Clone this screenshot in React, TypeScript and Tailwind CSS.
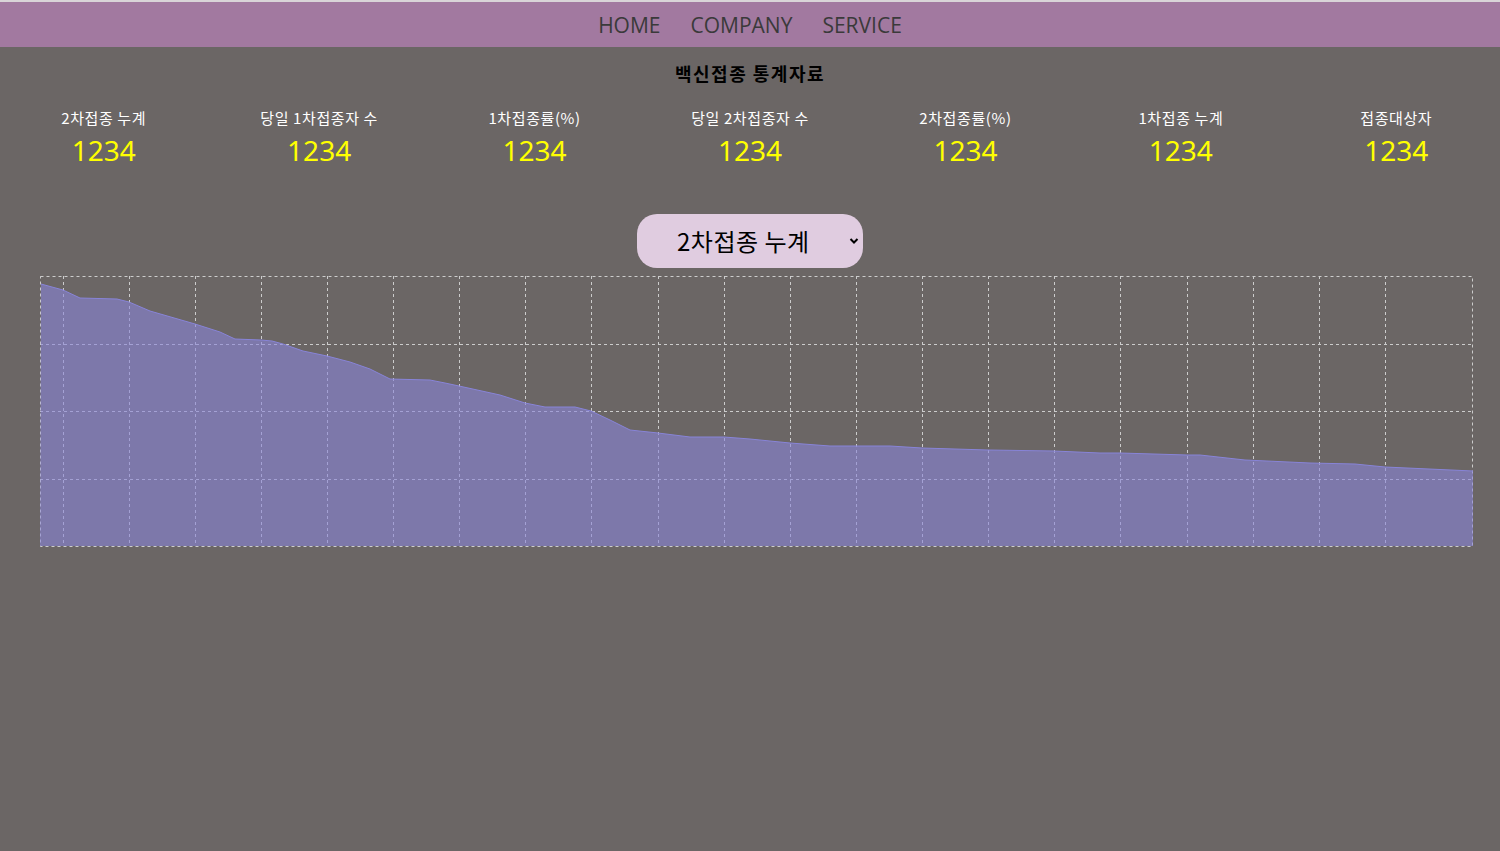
import React from "react";

const stats = [
  "2차접종 누계",
  "당일 1차접종자 수",
  "1차접종률(%)",
  "당일 2차접종자 수",
  "2차접종률(%)",
  "1차접종 누계",
  "접종대상자",
];

// chart points in page px (chart box starts at x=40, y=276)
const pts: [number, number][] = [
  [41, 284], [63, 290], [80, 298], [117, 299], [129, 302], [150, 311], [195, 324],
  [220, 332], [235, 339], [261, 340], [272, 341], [283, 344], [303, 351], [327, 356],
  [350, 362], [370, 369], [390, 379], [430, 380], [445, 383], [459, 386], [500, 395],
  [525, 403], [545, 407], [575, 407], [591, 411], [610, 420], [630, 430], [658, 433],
  [690, 437], [724, 437], [750, 439], [790, 443], [830, 446], [890, 446], [922, 448],
  [988, 450], [1054, 451], [1100, 453], [1120, 453], [1187, 455], [1200, 455],
  [1245, 460], [1310, 463], [1355, 464], [1385, 467], [1473, 471],
];

const vLines = [63, 129, 195, 261, 327, 393, 459, 525, 591, 658, 724, 790, 856, 922, 988, 1054, 1120, 1187, 1253, 1319, 1385];
const hLines = [344, 411, 479];

function Chart() {
  const W = 1433;
  const H = 270;
  const line = pts.map(([x, y]) => `${x - 40},${y - 276}`).join(" L ");
  const area = `M 0,${H} L ${line} L ${W},${H} Z`;
  return (
    <svg width={W} height={H + 1} viewBox={`0 0 ${W} ${H + 1}`} className="block">
      <g stroke="#cccccc" strokeDasharray="3 3" strokeWidth="1" fill="none">
        <rect x="0.5" y="0.5" width={W - 1} height={H} />
        {vLines.map((x) => (
          <line key={x} x1={x - 40 + 0.5} y1="0" x2={x - 40 + 0.5} y2={H} />
        ))}
        {hLines.map((y) => (
          <line key={y} x1="0" y1={y - 276 + 0.5} x2={W} y2={y - 276 + 0.5} />
        ))}
      </g>
      <path d={area} fill="#8884d8" fillOpacity="0.6" />
      <path d={`M ${line}`} fill="none" stroke="#8884d8" strokeWidth="1" />
    </svg>
  );
}

export default function App() {
  return (
    <div className="min-h-[851px] w-full overflow-hidden bg-[#6b6665] font-['Noto_Sans','Noto_Sans_CJK_KR',sans-serif]">
      <nav className="h-[47px] border-t-2 border-[#d9d4d8] bg-[#a279a0] flex items-center justify-center gap-[30px] pt-[2px] font-['Open_Sans',sans-serif] font-normal text-[21px] text-[#3a3a3a]">
        <span>HOME</span>
        <span>COMPANY</span>
        <span>SERVICE</span>
      </nav>

      <h1 className="mt-[14px] text-center text-[18px] font-bold leading-[24px] tracking-[1.5px] text-black font-['Noto_Sans_CJK_KR',sans-serif]">
        백신접종 통계자료
      </h1>

      <div className="mx-[-4px] mt-[24px] grid grid-cols-7">
        {stats.map((s) => (
          <div key={s} className="flex flex-col items-center">
            <span className="text-[15px] leading-[18px] tracking-[0.6px] text-white font-['Noto_Sans_CJK_KR',sans-serif]">{s}</span>
            <span className="mt-[6px] text-[28px] leading-[34px] text-[#ffff00] font-['Noto_Sans',sans-serif]">1234</span>
          </div>
        ))}
      </div>

      <div className="mt-[47px] flex justify-center">
        <div className="relative flex h-[54px] w-[226px] items-center rounded-[20px] bg-[#e0cce0] pl-[40px]">
          <span className="text-[24px] tracking-[0.5px] text-black font-['Noto_Sans_CJK_KR',sans-serif]">2차접종 누계</span>
          <svg width="10" height="8" viewBox="0 0 10 8" className="absolute right-[4px] top-[23px]">
            <path d="M1.5 2 L5 5.5 L8.5 2" fill="none" stroke="#000" strokeWidth="2" />
          </svg>
        </div>
      </div>

      <div className="mt-[8px] pl-[40px]">
        <Chart />
      </div>
    </div>
  );
}
